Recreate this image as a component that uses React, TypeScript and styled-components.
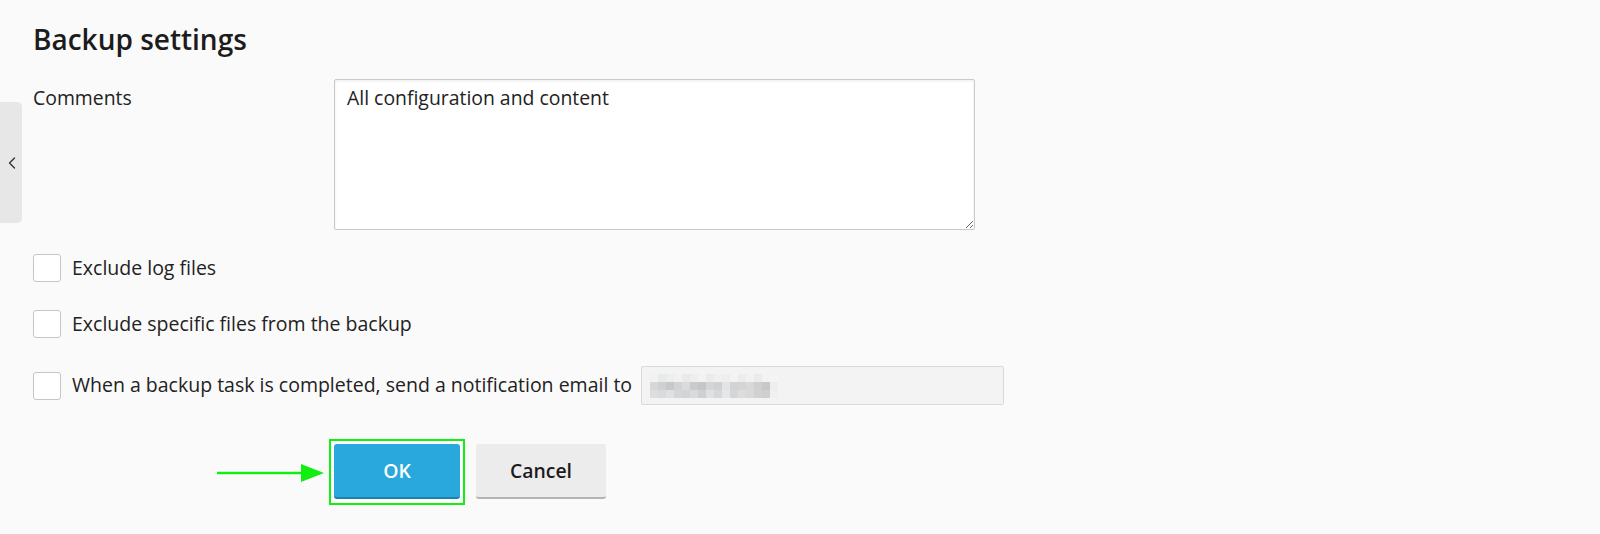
import React from "react";
import styled, { createGlobalStyle } from "styled-components";
import { ChevronLeft } from "lucide-react";

const GlobalStyle = createGlobalStyle`
  html, body {
    margin: 0;
    padding: 0;
    background: #fafafa;
    font-family: "Open Sans", "Noto Sans", Arial, sans-serif;
    color: #222;
  }
  * { box-sizing: border-box; }
`;

const Page = styled.div`
  position: relative;
  min-height: 534px;
  padding: 22px 33px 0 33px;
`;

const DrawerTab = styled.button`
  position: absolute;
  left: 0;
  top: 102px;
  width: 22px;
  height: 121px;
  border: none;
  padding: 0 0 0 2px;
  background: #e7e7e7;
  border-radius: 0 5px 5px 0;
  display: flex;
  align-items: center;
  justify-content: center;
  color: #333;
  cursor: pointer;
`;

const Title = styled.h2`
  margin: 0;
  font-size: 28px;
  line-height: 34px;
  font-weight: 600;
  color: #1c1c1c;
`;

const Form = styled.div`
  margin-top: 23px;
  display: grid;
  grid-template-columns: 301px 1fr;
  align-items: start;
`;

const FieldLabel = styled.label`
  padding-top: 6px;
  font-size: 19.4px;
  line-height: 26.88px;
  color: #222;
`;

const TextArea = styled.textarea`
  display: block;
  width: 641px;
  height: 151px;
  margin: 0;
  padding: 5px 12px;
  font-family: "Open Sans", "Noto Sans", Arial, sans-serif;
  font-size: 19.4px;
  line-height: 26.88px;
  color: #222;
  background: #fff;
  border: 1px solid #c9c9c9;
  border-radius: 2px;
  box-shadow: inset 0 1px 3px rgba(0, 0, 0, 0.08);
  outline: none;
`;

const Options = styled.div`
  grid-column: 1 / -1;
  margin-top: 24px;
  display: flex;
  flex-direction: column;
  gap: 28px;
`;

const OptionRow = styled.div`
  display: flex;
  align-items: center;
  min-height: 28px;
  font-size: 19.5px;
  line-height: 26.88px;
  color: #222;
`;

const CheckBox = styled.span`
  flex: none;
  width: 28px;
  height: 28px;
  margin-right: 11px;
  background: #fff;
  border: 1px solid #c6c6c6;
  border-radius: 3px;
`;

const EmailField = styled.div`
  width: 363px;
  height: 39px;
  margin-left: 9px;
  background: #f3f3f3;
  border: 1px solid #dadada;
  border-radius: 2px;
  display: flex;
  align-items: center;
  padding-left: 8px;
`;

const Actions = styled.div`
  grid-column: 2;
  position: relative;
  margin-top: 39px;
  display: flex;
  align-items: flex-start;
  gap: 16px;
`;

const Highlight = styled.span`
  display: inline-flex;
  margin: -5px -5px -6px -5px;
  padding: 3px 3px 4px 3px;
  border: 2px solid #0ff00f;
  background: #fff;
`;

const Button = styled.button<{ $primary?: boolean }>`
  height: 55px;
  width: ${(p) => (p.$primary ? "126px" : "130px")};
  border: none;
  border-bottom: 2px solid ${(p) => (p.$primary ? "#1d82ad" : "#b3b3b3")};
  border-radius: 3px;
  background: ${(p) => (p.$primary ? "#29a8dd" : "#ececec")};
  color: ${(p) => (p.$primary ? "#fff" : "#1c1c1c")};
  font-family: "Open Sans", "Noto Sans", Arial, sans-serif;
  font-size: 19.4px;
  font-weight: 600;
  padding: 0;
  cursor: pointer;
`;

const Arrow = styled.svg`
  position: absolute;
  left: -117px;
  top: 20px;
  overflow: visible;
`;

const mosaic: string[][] = [
  ["#f0f1f2", "#e8e9ea", "#eceded", "#f1f1f2", "#e9e9ea", "#eeeeef", "#f2f2f3", "#ebebec", "#f0f0f1", "#eeeeef", "#f3f3f3", "#ececec", "#f1f1f1", "#ebebeb", "#f3f3f3", "#f4f4f4"],
  ["#d6d7d8", "#cfd0d1", "#c7c8c9", "#d2d3d4", "#dadbdc", "#cacbcc", "#c5c6c7", "#d4d5d6", "#d0d1d2", "#e3e4e6", "#d3d3d3", "#d5d5d5", "#d8d8d8", "#cfcfcf", "#c8c8c8", "#eeeeee"],
  ["#dcdddf", "#d9dadb", "#dfe0e1", "#d5d6d7", "#d3d4d6", "#d9dadb", "#cfd0d1", "#e0e1e2", "#d7d8d9", "#e6e7e9", "#d6d6d6", "#dcdcdc", "#d9d9d9", "#d1d1d1", "#cfcfcf", "#f0f0f0"],
];

function BlurredEmail() {
  return (
    <svg width="128" height="24" viewBox="0 0 128 24" aria-hidden="true">
      {mosaic.map((row, r) =>
        row.map((c, i) => (
          <rect key={`${r}-${i}`} x={i * 8} y={r * 8} width="8" height="8" fill={c} />
        ))
      )}
    </svg>
  );
}

export default function App() {
  return (
    <>
      <GlobalStyle />
      <Page>
        <DrawerTab aria-label="Collapse">
          <ChevronLeft size={20} strokeWidth={1.6} />
        </DrawerTab>
        <Title>Backup settings</Title>
        <Form>
          <FieldLabel>Comments</FieldLabel>
          <TextArea defaultValue="All configuration and content" />
          <Options>
            <OptionRow>
              <CheckBox />
              Exclude log files
            </OptionRow>
            <OptionRow>
              <CheckBox />
              Exclude specific files from the backup
            </OptionRow>
            <OptionRow>
              <CheckBox />
              When a backup task is completed, send a notification email to
              <EmailField>
                <BlurredEmail />
              </EmailField>
            </OptionRow>
          </Options>
          <Actions>
            <Arrow width="108" height="18" viewBox="0 0 108 18" aria-hidden="true">
              <line x1="0" y1="9" x2="88" y2="9" stroke="#12ee12" strokeWidth="2.5" />
              <polygon points="84,0 107,9 84,18" fill="#12ee12" />
            </Arrow>
            <Highlight>
              <Button $primary>OK</Button>
            </Highlight>
            <Button>Cancel</Button>
          </Actions>
        </Form>
      </Page>
    </>
  );
}
